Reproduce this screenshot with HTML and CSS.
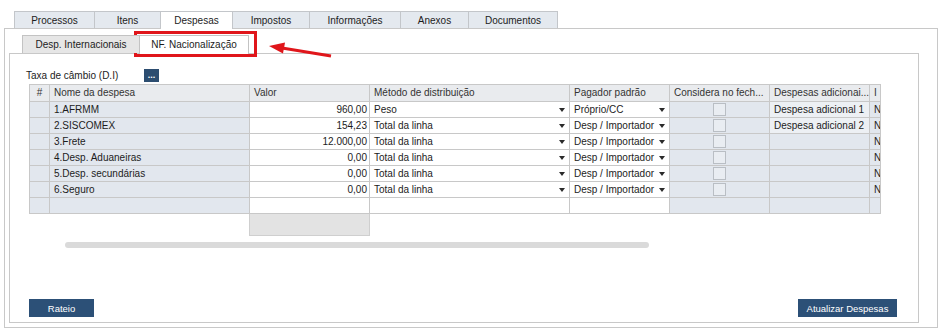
FILE: index.html
```html
<!DOCTYPE html>
<html lang="pt-BR">

<head>
  <meta charset="UTF-8">
  <title>Despesas - NF. Nacionalização</title>
  <link rel="stylesheet" href="styles.css">
</head>

<body>

  <div class="window">
    <!-- Main tabs -->
    <div class="tabs">
      <div class="tab" style="width:81px">Processos</div>
      <div class="tab" style="width:66px">Itens</div>
      <div class="tab active" style="width:72px">Despesas</div>
      <div class="tab" style="width:77px">Impostos</div>
      <div class="tab" style="width:91px">Informações</div>
      <div class="tab" style="width:68px">Anexos</div>
      <div class="tab" style="width:89px">Documentos</div>
    </div>

    <div class="panel">
      <!-- Sub tabs -->
      <div class="subtabs">
        <div class="subtab" style="width:118px">Desp. Internacionais</div>
        <div class="subtab active" style="width:109px">NF. Nacionalização</div>
      </div>

      <div class="subpanel">
        <div class="taxa-row">
          <span class="taxa-label">Taxa de câmbio (D.I)</span>
          <button class="dots-btn">...</button>
        </div>

        <table class="grid">
          <thead>
            <tr>
              <th style="width:20px" class="center">#</th>
              <th style="width:200px">Nome da despesa</th>
              <th style="width:120px">Valor</th>
              <th style="width:200px">Método de distribuição</th>
              <th style="width:100px">Pagador padrão</th>
              <th style="width:100px">Considera no fech...</th>
              <th style="width:100px">Despesas adicionai...</th>
              <th style="width:11px">I</th>
            </tr>
          </thead>
          <tbody id="gridBody"></tbody>
        </table>

        <div class="grid-foot"></div>
        <div class="scrollbar"></div>

        <div class="actions">
          <button class="btn" style="width:65px">Rateio</button>
          <button class="btn" style="width:99px">Atualizar Despesas</button>
        </div>
      </div>
    </div>
  </div>

  <!-- Highlight overlay -->
  <div class="highlight"></div>
  <svg class="arrow" width="72" height="26" viewBox="0 0 72 26">
    <line x1="69" y1="20" x2="20" y2="12" stroke="#e0161b" stroke-width="3" />
    <polygon points="7,10 23,6.5 21,17.5" fill="#e0161b" />
  </svg>

  <script>
    // Expense rows
    const rows = [
      { name: '1.AFRMM', valor: '960,00', metodo: 'Peso', pagador: 'Próprio/CC', extra: 'Despesa adicional 1' },
      { name: '2.SISCOMEX', valor: '154,23', metodo: 'Total da linha', pagador: 'Desp / Importador', extra: 'Despesa adicional 2' },
      { name: '3.Frete', valor: '12.000,00', metodo: 'Total da linha', pagador: 'Desp / Importador', extra: '' },
      { name: '4.Desp. Aduaneiras', valor: '0,00', metodo: 'Total da linha', pagador: 'Desp / Importador', extra: '' },
      { name: '5.Desp. secundárias', valor: '0,00', metodo: 'Total da linha', pagador: 'Desp / Importador', extra: '' },
      { name: '6.Seguro', valor: '0,00', metodo: 'Total da linha', pagador: 'Desp / Importador', extra: '' }
    ];

    const body = document.getElementById('gridBody');
    body.innerHTML = rows.map(r => `
      <tr>
        <td class="ro"></td>
        <td class="ro">${r.name}</td>
        <td class="num">${r.valor}</td>
        <td><div class="combo"><span>${r.metodo}</span><i class="caret"></i></div></td>
        <td><div class="combo"><span>${r.pagador}</span><i class="caret"></i></div></td>
        <td class="ro"><div class="check"></div></td>
        <td class="${r.extra ? 'lite' : 'ro'}">${r.extra}</td>
        <td class="ro">N</td>
      </tr>`).join('') + `
      <tr>
        <td class="ro"></td>
        <td class="ro"></td>
        <td></td>
        <td></td>
        <td></td>
        <td class="ro"></td>
        <td class="ro"></td>
        <td class="ro"></td>
      </tr>`;
  </script>
</body>

</html>
```

FILE: styles.css
```css
/* Global */
body {
  margin: 0;
  font-family: "Liberation Sans", Arial, sans-serif;
  font-size: 10px;
  color: #1c1c1c;
  background-color: #ffffff;
}

.window {
  padding: 11px 0 0 4px;
  width: 934px;
}

/* Main tabs */
.tabs {
  display: flex;
  align-items: flex-start;
  margin-left: 10px;
  height: 18px;
  margin-bottom: -1px;
  position: relative;
  z-index: 1;
}

.tab {
  box-sizing: border-box;
  height: 17px;
  border: 1px solid #c3c6ca;
  border-left: none;
  border-bottom: none;
  background-color: #e4e9ef;
  display: flex;
  align-items: center;
  justify-content: center;
  font-size: 10px;
}

.tab:first-child {
  border-left: 1px solid #c3c6ca;
}

.tab.active {
  height: 18px;
  background-color: #ffffff;
  padding-bottom: 1px;
}

/* Outer panel */
.panel {
  box-sizing: border-box;
  width: 934px;
  border: 1px solid #c8c8c8;
  padding: 6px 18px 4px 4px;
}

/* Sub tabs */
.subtabs {
  display: flex;
  align-items: flex-start;
  margin-left: 13px;
  height: 19px;
  margin-bottom: -1px;
  position: relative;
  z-index: 1;
}

.subtab {
  box-sizing: border-box;
  height: 18px;
  border: 1px solid #c3c3c3;
  border-bottom: none;
  background-color: #e6e6e6;
  display: flex;
  align-items: center;
  justify-content: center;
  font-size: 10px;
}

.subtab + .subtab {
  border-left: none;
}

.subtab.active {
  height: 19px;
  background-color: #ffffff;
  padding-bottom: 1px;
}

/* Inner panel */
.subpanel {
  box-sizing: border-box;
  height: 270px;
  border: 1px solid #c8c8c8;
  padding: 14px 21px 5px 16px;
  display: flex;
  flex-direction: column;
}

.taxa-row {
  display: flex;
  align-items: center;
  height: 14px;
}

.taxa-label {
  width: 118px;
}

.dots-btn {
  width: 15px;
  height: 13px;
  padding: 0;
  border: none;
  background-color: #2c4d70;
  color: #ffffff;
  font-family: inherit;
  font-size: 9px;
  font-weight: bold;
  line-height: 9px;
}

/* Grid */
.grid {
  margin: 2px 0 0 3px;
  border-collapse: separate;
  border-spacing: 0;
  table-layout: fixed;
  width: 852px;
  border-top: 1px solid #c8c8c8;
  border-left: 1px solid #c8c8c8;
}

.grid th,
.grid td {
  box-sizing: border-box;
  border-right: 1px solid #c8c8c8;
  border-bottom: 1px solid #c8c8c8;
  padding: 0 0 0 4px;
  white-space: nowrap;
  overflow: hidden;
  text-overflow: clip;
  text-align: left;
  font-weight: normal;
  line-height: 14px;
}

.grid th {
  height: 17px;
  background-color: #e9ebee;
  color: #333333;
}

.grid th.center {
  text-align: center;
  padding: 0;
}

.grid td {
  height: 16px;
  background-color: #ffffff;
}

.grid td.ro {
  background-color: #e2e7ee;
}

.grid td.lite {
  background-color: #edf0f4;
}

.grid td.num {
  text-align: right;
  padding: 0 2px 0 0;
}

.combo {
  display: flex;
  justify-content: space-between;
  align-items: center;
  padding-right: 4px;
}

.caret {
  width: 0;
  height: 0;
  border-left: 3.5px solid transparent;
  border-right: 3.5px solid transparent;
  border-top: 4px solid #2a2a2a;
}

.check {
  box-sizing: border-box;
  width: 13px;
  height: 13px;
  margin: 0 auto;
  position: relative;
  left: -2px;
  border: 1px solid #b9bec4;
  background-color: #e9edf2;
}

.grid-foot {
  box-sizing: border-box;
  margin-left: 223px;
  width: 121px;
  height: 22px;
  background-color: #e3e3e3;
  border: 1px solid #cfcfcf;
  border-top: none;
}

.scrollbar {
  margin: 6px 0 0 39px;
  width: 584px;
  height: 6px;
  border-radius: 3px;
  background-color: #dadada;
}

/* Buttons */
.actions {
  margin-top: auto;
  display: flex;
  justify-content: space-between;
  padding-left: 3px;
}

.btn {
  height: 18px;
  padding: 0;
  border: none;
  background-color: #2c5077;
  color: #ffffff;
  font-family: inherit;
  font-size: 9.5px;
}

/* Highlight overlay */
.highlight {
  position: absolute;
  left: 134px;
  top: 31px;
  width: 123px;
  height: 26px;
  box-sizing: border-box;
  border: 3px solid #e0161b;
}

.arrow {
  position: absolute;
  left: 262px;
  top: 36px;
}
```
